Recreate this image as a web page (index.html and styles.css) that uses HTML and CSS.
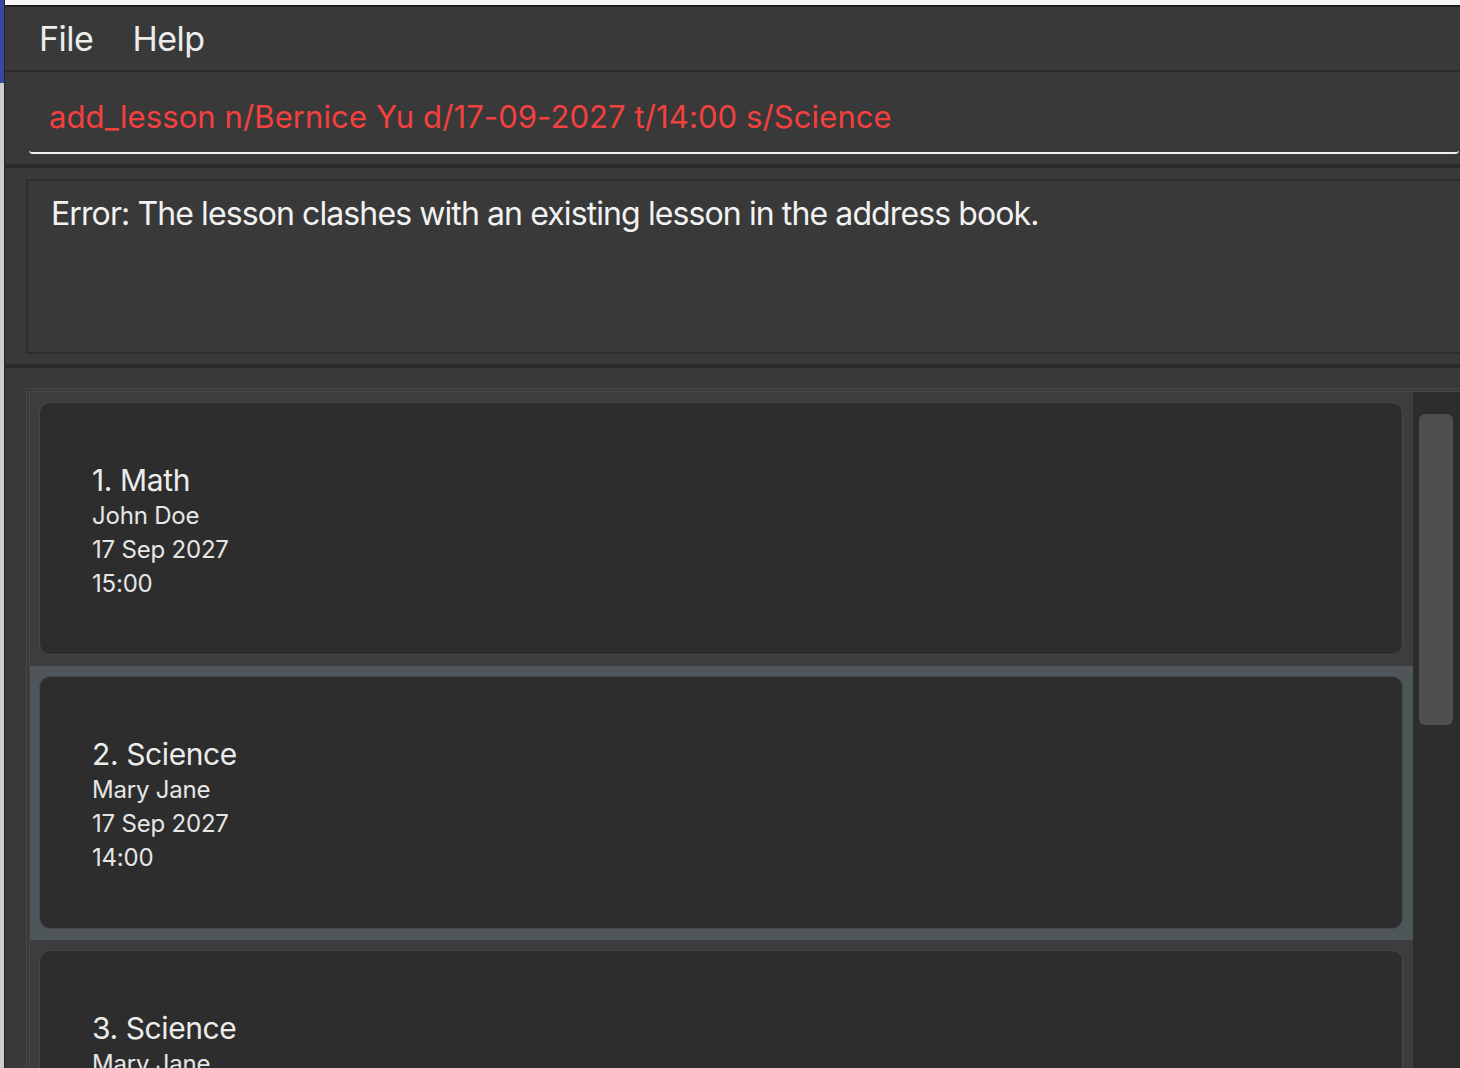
FILE: index.html
```
<!DOCTYPE html>
<html>
<head>
<meta charset="utf-8">
<link rel="stylesheet" href="styles.css">
</head>
<body>
<div class="left-strip"></div>
<div class="main">
  <div class="top-strip"></div>
  <div class="menubar">
    <span class="menu-item">File</span>
    <span class="menu-item">Help</span>
  </div>
  <div class="command-pane">
    <div class="command-field">add_lesson n/Bernice Yu d/17-09-2027 t/14:00 s/Science</div>
  </div>
  <div class="result-pane">
    <div class="result-box">Error: The lesson clashes with an existing lesson in the address book.</div>
  </div>
  <div class="list-pane">
    <div class="list">
      <div class="list-inner">
        <div class="cells">
          <div class="cell">
            <div class="card">
              <div class="card-title">1. Math</div>
              <div class="card-line">John Doe</div>
              <div class="card-line">17 Sep 2027</div>
              <div class="card-line">15:00</div>
            </div>
          </div>
          <div class="cell selected">
            <div class="card">
              <div class="card-title">2. Science</div>
              <div class="card-line">Mary Jane</div>
              <div class="card-line">17 Sep 2027</div>
              <div class="card-line">14:00</div>
            </div>
          </div>
          <div class="cell">
            <div class="card">
              <div class="card-title">3. Science</div>
              <div class="card-line">Mary Jane</div>
              <div class="card-line">17 Sep 2027</div>
              <div class="card-line">14:00</div>
            </div>
          </div>
        </div>
        <div class="scroll-track">
          <div class="scroll-thumb"></div>
        </div>
      </div>
    </div>
  </div>
</div>
</body>
</html>
```
FILE: styles.css
```
html, body {
  margin: 0;
  padding: 0;
}
body {
  width: 1460px;
  height: 1068px;
  overflow: hidden;
  display: flex;
  background: #393939;
  font-family: Inter, "Noto Sans", sans-serif;
  color: #ececec;
}
.left-strip {
  width: 4px;
  flex: none;
  background: linear-gradient(#3a47a0 0, #3a47a0 83px, #cdcdcd 83px);
  border-right: 1px solid #262626;
}
.main {
  flex: 1;
  display: flex;
  flex-direction: column;
  min-width: 0;
  overflow: hidden;
}
.top-strip {
  height: 5px;
  background: #f6f6f6;
  border-bottom: 2px solid #1d1d1d;
  flex: none;
}
.menubar {
  height: 63px;
  flex: none;
  display: flex;
  align-items: center;
  gap: 39px;
  padding-left: 34px;
  border-bottom: 2px solid #2b2b2b;
  background: #393939;
}
.menu-item {
  font-size: 34px;
  letter-spacing: -0.5px;
  color: #ececec;
  line-height: 1;
}
.command-pane {
  flex: none;
  padding-left: 24px;
  border-bottom: 4px solid #2b2b2b;
  box-sizing: border-box;
  height: 96px;
}
.command-field {
  height: 82px;
  margin-right: 1px;
  box-sizing: border-box;
  border-bottom: 2px solid #f2f2f2;
  border-radius: 0 0 4px 4px;
  padding: 27px 0 0 20px;
  font-size: 31px;
  line-height: 36px;
  letter-spacing: 0.1px;
  color: #f4403f;
}
.result-pane {
  flex: none;
  padding: 11px 0 10px 21px;
  border-bottom: 4px solid #2b2b2b;
}
.result-box {
  height: 175px;
  box-sizing: border-box;
  margin-right: -20px;
  border: 2px solid #2d2d2d;
  padding: 13px 0 0 23px;
  font-size: 32px;
  line-height: 40px;
  letter-spacing: -0.9px;
  color: #f2f2f2;
}
.list-pane {
  flex: 1;
  padding: 20px 0 0 21px;
  min-height: 0;
}
.list {
  height: 100%;
  border-top: 1px solid #484848;
  border-left: 1px solid #484848;
  padding: 2px 0 0 2px;
  background: #3a3a3a;
  box-sizing: border-box;
}
.list-inner {
  height: 100%;
  display: flex;
  border-top: 1px solid #444;
  border-left: 1px solid #444;
  overflow: hidden;
}
.cells {
  width: 1383px;
  flex: none;
  display: flex;
  flex-direction: column;
}
.cell {
  flex: none;
  height: 274px;
  box-sizing: border-box;
  padding: 10px 10px 11px 9px;
  background: #3b3d3f;
}
.cell.selected {
  background: #4f5659;
}
.card {
  height: 100%;
  box-sizing: border-box;
  border: 1px solid #484848;
  border-radius: 11px;
  background: #2d2d2d;
  padding: 4px 0 0 52px;
  display: flex;
  flex-direction: column;
  justify-content: center;
}
.card-title {
  font-size: 30px;
  line-height: 38px;
  letter-spacing: -0.4px;
  color: #ececec;
}
.card-line {
  font-size: 24px;
  line-height: 34px;
  letter-spacing: -0.2px;
  color: #e6e6e6;
}
.scroll-track {
  flex: 1;
  background: #2d2d2d;
  padding: 22px 0 0 6px;
}
.scroll-thumb {
  width: 34px;
  height: 311px;
  border-radius: 6px;
  background: #4e4e4e;
}
```
